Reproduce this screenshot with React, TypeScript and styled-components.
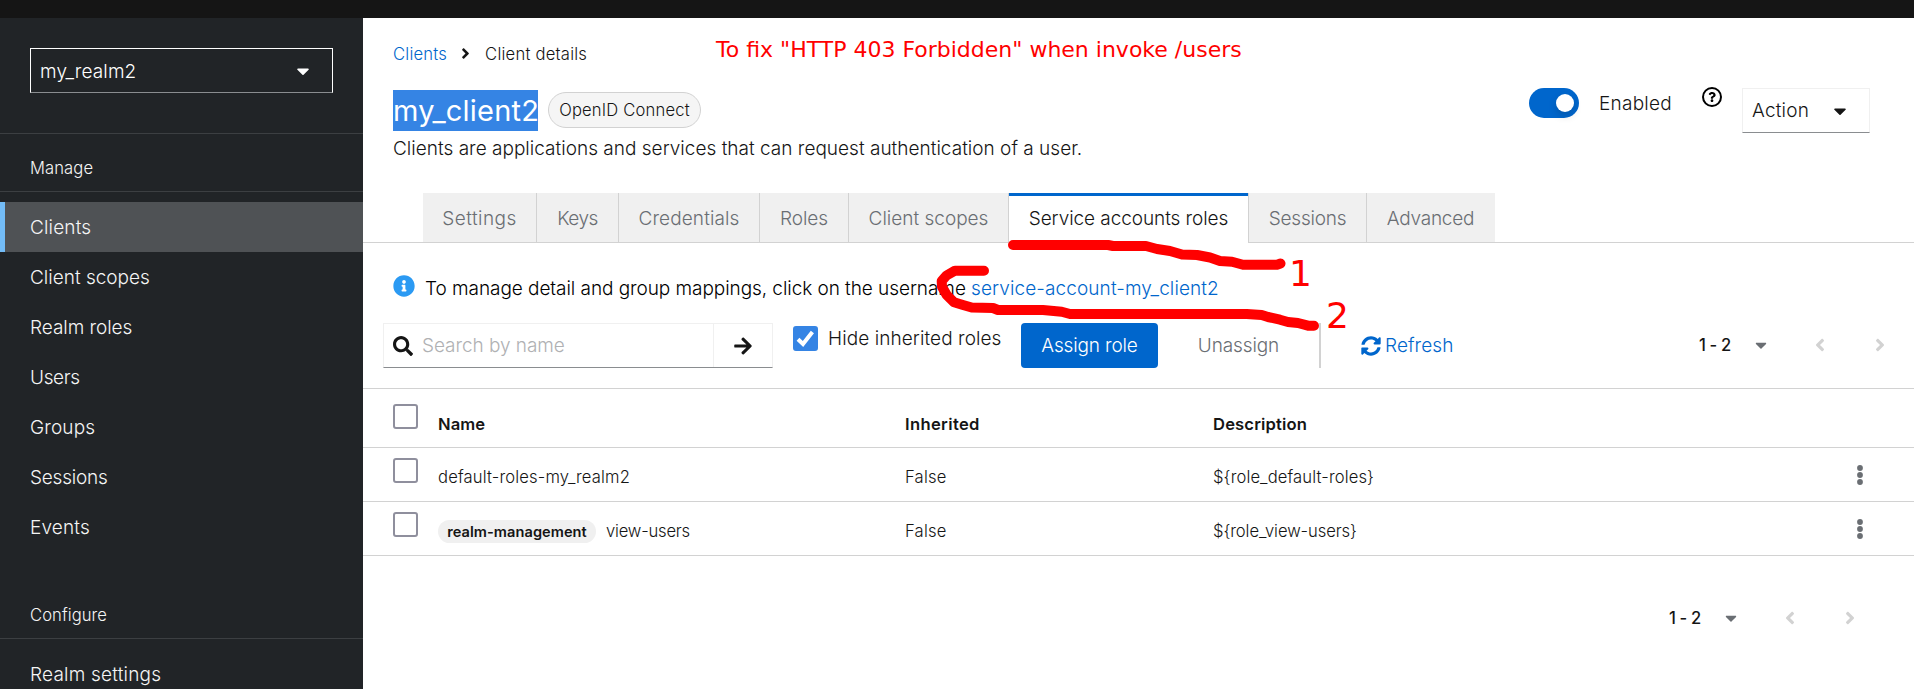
import React from 'react';
import styled, { createGlobalStyle, css } from 'styled-components';
import {
  FaAngleLeft,
  FaAngleRight,
  FaArrowRight,
  FaCaretDown,
  FaInfoCircle,
  FaQuestion,
  FaSearch,
  FaSyncAlt,
} from 'react-icons/fa';

const color = {
  text: '#151515',
  muted: '#6a6e73',
  link: '#0066cc',
  line: '#d2d2d2',
  soft: '#f0f0f0',
  edge: '#8a8d90',
  red: '#ff0000',
};

const Global = createGlobalStyle`
  *, *::before, *::after { box-sizing: border-box; }
  body {
    margin: 0;
    background: #fff;
    color: ${color.text};
    font-family: Inter, 'Liberation Sans', sans-serif;
    font-size: 19px;
    font-weight: 350;
    overflow: hidden;
  }
  svg { display: block; flex: none; }
`;

type Tracked = { $track?: number };
const tracking = css<Tracked>`
  letter-spacing: ${(p) => p.$track ?? 0}px;
  white-space: nowrap;
`;

const Page = styled.div`
  position: relative;
  display: grid;
  grid-template: 18px 671px / 363px 1fr;
  height: 689px;
  overflow: hidden;
`;

const Masthead = styled.header`
  grid-column: 1 / -1;
  background: #151515;
`;

const Sidebar = styled.nav`
  background: #212427;
  color: #f5f5f5;
  overflow: hidden;
`;

const RealmArea = styled.div`
  height: 116px;
  padding: 30px 30px 0;
  border-bottom: 1px solid #3c3f42;
`;

const RealmSelect = styled.button<Tracked>`
  display: flex;
  align-items: center;
  justify-content: space-between;
  width: 303px;
  height: 45px;
  padding: 1px 19px 0 9px;
  border: 1px solid #fff;
  border-bottom-color: #8a8d90;
  background: transparent;
  color: #fff;
  font: inherit;
  ${tracking}
`;

const NavTitle = styled.h2<Tracked & { $height: number }>`
  display: flex;
  align-items: flex-end;
  height: ${(p) => p.$height}px;
  margin: 0 0 10px;
  padding: 0 30px 12px;
  border-bottom: 1px solid #3c3f42;
  font-size: 16.6px;
  font-weight: 350;
  line-height: 22px;
  ${tracking}
`;

const NavItem = styled.a<Tracked & { $active?: boolean }>`
  display: block;
  height: 50px;
  padding-left: ${(p) => (p.$active ? 25 : 30)}px;
  border-left: ${(p) => (p.$active ? '5px solid #73bcf7' : '0')};
  background: ${(p) => (p.$active ? '#4f5255' : 'transparent')};
  line-height: 52px;
  ${tracking}
`;

const Main = styled.main`
  min-width: 0;
  background: #fff;
`;

const Header = styled.section`
  display: flex;
  justify-content: space-between;
  height: 175px;
  padding: 23px 44px 0 30px;
`;

const Breadcrumb = styled.div`
  display: flex;
  align-items: center;
  height: 24px;
  font-size: 16.6px;
  svg { margin: 0 11px 0 10px; }
`;

const Crumb = styled.span<Tracked & { $link?: boolean }>`
  padding-top: 2px;
  color: ${(p) => (p.$link ? color.link : color.text)};
  line-height: 26px;
  ${tracking}
`;

const TitleRow = styled.div`
  display: flex;
  align-items: flex-start;
  gap: 10px;
  margin-top: 25px;
`;

const Title = styled.h1<Tracked>`
  width: 145px;
  height: 41px;
  margin: 0;
  background: #3584e4;
  color: #fff;
  font-size: 29px;
  font-weight: 400;
  line-height: 41px;
  ${tracking}
`;

const Protocol = styled.span<Tracked>`
  width: 153px;
  height: 36px;
  margin-top: 2px;
  border: 1px solid ${color.line};
  border-radius: 18px;
  background: #f5f5f5;
  font-size: 16.6px;
  line-height: 34px;
  text-align: center;
  ${tracking}
`;

const Description = styled.p<Tracked>`
  margin: 5px 0 0;
  line-height: 26px;
  ${tracking}
`;

const HeaderActions = styled.div`
  display: flex;
  align-items: flex-start;
  padding-top: 47px;
`;

const Switch = styled.span`
  width: 50px;
  height: 30px;
  padding: 6px 5px;
  border-radius: 15px;
  background: ${color.link};
  &::after {
    content: '';
    display: block;
    width: 18px;
    height: 18px;
    margin-left: auto;
    border-radius: 50%;
    background: #fff;
    box-shadow: 0 4px 8px rgba(3, 3, 3, 0.16);
  }
`;

const SwitchLabel = styled.span<Tracked>`
  width: 103px;
  margin: 0 0 0 20px;
  line-height: 31px;
  ${tracking}
`;

const Help = styled.span`
  display: flex;
  align-items: center;
  justify-content: center;
  width: 20px;
  height: 20px;
  margin: -1px 20px 0 0;
  border: 2.5px solid #000;
  border-radius: 50%;
  color: #000;
`;

const ActionButton = styled.button<Tracked>`
  display: flex;
  align-items: center;
  justify-content: space-between;
  width: 128px;
  height: 45px;
  padding: 0 19px 0 9px;
  border: 1px solid ${color.soft};
  border-bottom-color: ${color.edge};
  background: #fff;
  color: ${color.text};
  font: inherit;
  ${tracking}
`;

const Tabs = styled.div`
  display: flex;
  height: 50px;
  padding-left: 60px;
  box-shadow: inset 0 -1px ${color.line};
`;

const Tab = styled.button<Tracked & { $width: number; $active?: boolean }>`
  flex: none;
  width: ${(p) => p.$width}px;
  height: 49px;
  padding: 1px 0 0;
  border: 0;
  border-right: 1px solid ${color.line};
  background: ${color.soft};
  color: ${color.muted};
  font: inherit;
  text-align: center;
  ${tracking}
  &:last-child { border-right-color: ${color.soft}; }
  ${(p) =>
    p.$active &&
    css`
      height: 50px;
      background: #fff;
      color: ${color.text};
      box-shadow: inset 0 3px ${color.link};
    `}
`;

const Notice = styled.div`
  display: flex;
  align-items: center;
  height: 50px;
  padding: 40px 30px 0;
  color: #000;
  svg { margin-top: -4px; }
`;

const NoticeText = styled.span<Tracked>`
  width: 546px;
  margin-left: 10px;
  ${tracking}
`;

const Link = styled.a<Tracked>`
  color: ${color.link};
  ${tracking}
`;

const Toolbar = styled.div`
  display: flex;
  align-items: flex-start;
  height: 96px;
  padding: 30px 24px 0 20px;
  border-bottom: 1px solid ${color.line};
`;

const SearchGroup = styled.div`
  display: flex;
  width: 390px;
  height: 45px;
  border: 1px solid ${color.soft};
  border-bottom-color: ${color.edge};
`;

const SearchField = styled.div<Tracked>`
  display: flex;
  align-items: center;
  gap: 9px;
  width: 330px;
  padding-left: 9px;
  border-right: 1px solid ${color.soft};
  color: #b0b1b3;
  ${tracking}
  svg { color: ${color.text}; }
`;

const SearchSubmit = styled.button`
  display: flex;
  flex: 1;
  align-items: center;
  justify-content: center;
  padding: 0;
  border: 0;
  background: transparent;
  color: ${color.text};
`;

const Checkbox = styled.span<{ $checked?: boolean }>`
  display: flex;
  align-items: center;
  justify-content: center;
  flex: none;
  width: 25px;
  height: 25px;
  border: 2px solid ${(p) => (p.$checked ? '#3584e4' : '#8f8f9d')};
  border-radius: 3px;
  background: ${(p) => (p.$checked ? '#3584e4' : '#fff')};
`;

const HideInherited = styled.label<Tracked>`
  display: flex;
  align-items: center;
  gap: 10px;
  width: 228px;
  height: 25px;
  margin: 3px 0 0 20px;
  ${tracking}
`;

const Button = styled.button<Tracked & { $width: number; $primary?: boolean }>`
  width: ${(p) => p.$width}px;
  height: 45px;
  padding: 0;
  border: 0;
  border-radius: 4px;
  background: ${(p) => (p.$primary ? color.link : 'transparent')};
  color: ${(p) => (p.$primary ? '#fff' : color.muted)};
  font: inherit;
  ${tracking}
`;

const Divider = styled.span`
  width: 2px;
  height: 45px;
  background: ${color.line};
`;

const RefreshButton = styled.button<Tracked>`
  display: flex;
  align-items: center;
  gap: 4px;
  height: 45px;
  margin-left: 40px;
  padding: 0;
  border: 0;
  background: transparent;
  color: ${color.link};
  font: inherit;
  ${tracking}
`;

const Pager = styled.div`
  display: flex;
  align-items: center;
  height: 44px;
  margin-left: auto;
  color: ${color.line};
`;

const PagerRange = styled.span<Tracked>`
  width: 53px;
  color: ${color.text};
  font-size: 16.6px;
  font-weight: 500;
  ${tracking}
`;

const PagerCaret = styled(FaCaretDown)`
  margin-right: 40px;
  color: ${color.muted};
`;

const PagerNext = styled(FaAngleRight)`
  margin-left: 40px;
`;

const Footer = styled.div`
  display: flex;
  padding: 40px 54px 0 0;
`;

const Row = styled.div<{ $head?: boolean }>`
  display: grid;
  grid-template-columns: 45px 467px 308px 1fr 57px;
  align-items: start;
  height: ${(p) => (p.$head ? 59 : 54)}px;
  padding: ${(p) => (p.$head ? 15 : 10)}px 0 0 30px;
  border-bottom: 1px solid ${color.line};
  font-size: 16.6px;
  font-weight: ${(p) => (p.$head ? 600 : 350)};
`;

const Cell = styled.span<Tracked & { $head?: boolean }>`
  display: flex;
  align-items: center;
  height: 26px;
  margin-top: ${(p) => (p.$head ? 7 : 6)}px;
  ${tracking}
`;

const ClientTag = styled.span<Tracked>`
  width: 158px;
  height: 23px;
  margin-right: 10px;
  border-radius: 12px;
  background: ${color.soft};
  font-size: 14.6px;
  font-weight: 600;
  line-height: 24px;
  text-align: center;
  ${tracking}
`;

const Kebab = styled.svg`
  margin-top: 7px;
`;

const Annotations = styled.svg`
  position: absolute;
  inset: 0;
  pointer-events: none;
  font-family: 'DejaVu Sans', sans-serif;
  font-weight: 400;
`;

const manage: [string, number][] = [
  ['Clients', 0.15],
  ['Client scopes', 0],
  ['Realm roles', -0.05],
  ['Users', -0.35],
  ['Groups', 0.15],
  ['Sessions', -0.22],
  ['Events', 0.15],
];

const tabs: [string, number, number][] = [
  ['Settings', 114, 0.45],
  ['Keys', 82, -0.5],
  ['Credentials', 141, 0.12],
  ['Roles', 89, -0.05],
  ['Client scopes', 160, 0],
  ['Service accounts roles', 240, -0.07],
  ['Sessions', 118, -0.22],
  ['Advanced', 128, -0.2],
];

const KebabIcon = () => (
  <Kebab width="6" height="20" viewBox="0 0 6 20" fill={color.muted}>
    <circle cx="3" cy="3" r="2.9" />
    <circle cx="3" cy="10" r="2.9" />
    <circle cx="3" cy="17" r="2.9" />
  </Kebab>
);

const Pagination = () => (
  <Pager>
    <PagerRange $track={-0.35}>1 - 2</PagerRange>
    <PagerCaret size={18} />
    <FaAngleLeft size={20} />
    <PagerNext size={20} />
  </Pager>
);

export default function App() {
  return (
    <Page>
      <Global />
      <Masthead />
      <Sidebar>
        <RealmArea>
          <RealmSelect $track={0.12}>
            my_realm2
            <FaCaretDown size={20} />
          </RealmSelect>
        </RealmArea>
        <NavTitle $height={58} $track={0.1}>Manage</NavTitle>
        {manage.map(([label, track], i) => (
          <NavItem key={label} $active={i === 0} $track={track}>{label}</NavItem>
        ))}
        <NavTitle $height={87} $track={0.08}>Configure</NavTitle>
        <NavItem $track={0.2}>Realm settings</NavItem>
      </Sidebar>

      <Main>
        <Header>
          <div>
            <Breadcrumb>
              <Crumb $link $track={0.22}>Clients</Crumb>
              <FaAngleRight size={17} />
              <Crumb $track={0.22}>Client details</Crumb>
            </Breadcrumb>
            <TitleRow>
              <Title $track={0.2}>my_client2</Title>
              <Protocol $track={0.18}>OpenID Connect</Protocol>
            </TitleRow>
            <Description $track={0.015}>
              Clients are applications and services that can request authentication of a user.
            </Description>
          </div>
          <HeaderActions>
            <Switch />
            <SwitchLabel $track={0.25}>Enabled</SwitchLabel>
            <Help><FaQuestion size={10} /></Help>
            <ActionButton $track={0.2}>
              Action
              <FaCaretDown size={20} />
            </ActionButton>
          </HeaderActions>
        </Header>

        <Tabs>
          {tabs.map(([label, width, track], i) => (
            <Tab key={label} $width={width} $track={track} $active={i === 5}>{label}</Tab>
          ))}
        </Tabs>

        <Notice>
          <FaInfoCircle size={22} color="#2b9af3" />
          <NoticeText $track={-0.06}>To manage detail and group mappings, click on the username</NoticeText>
          <Link $track={0.1}>service-account-my_client2</Link>
        </Notice>

        <Toolbar>
          <SearchGroup>
            <SearchField $track={-0.05}>
              <FaSearch size={20} />
              Search by name
            </SearchField>
            <SearchSubmit><FaArrowRight size={20} /></SearchSubmit>
          </SearchGroup>
          <HideInherited $track={0.08}>
            <Checkbox $checked>
              <svg width="19" height="17" viewBox="0 0 19 17" fill="none" stroke="#fff" strokeWidth="4">
                <path d="M2 9.2 L7 14 L16.4 2" />
              </svg>
            </Checkbox>
            Hide inherited roles
          </HideInherited>
          <Button $primary $width={137} $track={-0.15}>Assign role</Button>
          <Button $width={161} $track={-0.12}>Unassign</Button>
          <Divider />
          <RefreshButton $track={0.08}>
            <FaSyncAlt size={20} />
            Refresh
          </RefreshButton>
          <Pagination />
        </Toolbar>

        <Row $head>
          <Checkbox />
          <Cell $head $track={0.1}>Name</Cell>
          <Cell $head $track={0.35}>Inherited</Cell>
          <Cell $head $track={0.15}>Description</Cell>
        </Row>
        <Row>
          <Checkbox />
          <Cell $track={0.15}>default-roles-my_realm2</Cell>
          <Cell $track={0.2}>False</Cell>
          <Cell $track={0.12}>{'${role_default-roles}'}</Cell>
          <KebabIcon />
        </Row>
        <Row>
          <Checkbox />
          <Cell $track={-0.2}>
            <ClientTag $track={0.05}>realm-management</ClientTag>
            view-users
          </Cell>
          <Cell $track={0.2}>False</Cell>
          <Cell $track={-0.08}>{'${role_view-users}'}</Cell>
          <KebabIcon />
        </Row>

        <Footer>
          <Pagination />
        </Footer>
      </Main>

      <Annotations width="1914" height="689" viewBox="0 0 1914 689">
        <g fill="none" stroke={color.red} strokeWidth="10" strokeLinecap="round" strokeLinejoin="round">
          <path d="M1013 245 H1108 L1113 246 H1146 L1157 249 L1170 251 L1182 254.5 L1197 255 L1210 257.5 L1220 261 L1232 261.7 L1243 264.7 H1277 L1280.5 263.5" />
          <path d="M984 270.7 H955 L946.5 275.5 L941.7 281 L942 286.7 L946.7 295 L954 302.3 L963 305 L971.7 307.5 L993 308 L998 310 H1043 L1061.7 311.7 L1070 314 H1246.7 L1261.7 315 L1268 317 L1280 319.7 L1288 322 L1298 323 L1308 325.7 H1314" />
        </g>
        <g fill={color.red}>
          <text x="716" y="57" fontSize="22">To fix "HTTP 403 Forbidden" when invoke /users</text>
          <text x="1289" y="286" fontSize="36">1</text>
          <text x="1326" y="327.7" fontSize="36">2</text>
        </g>
      </Annotations>
    </Page>
  );
}
